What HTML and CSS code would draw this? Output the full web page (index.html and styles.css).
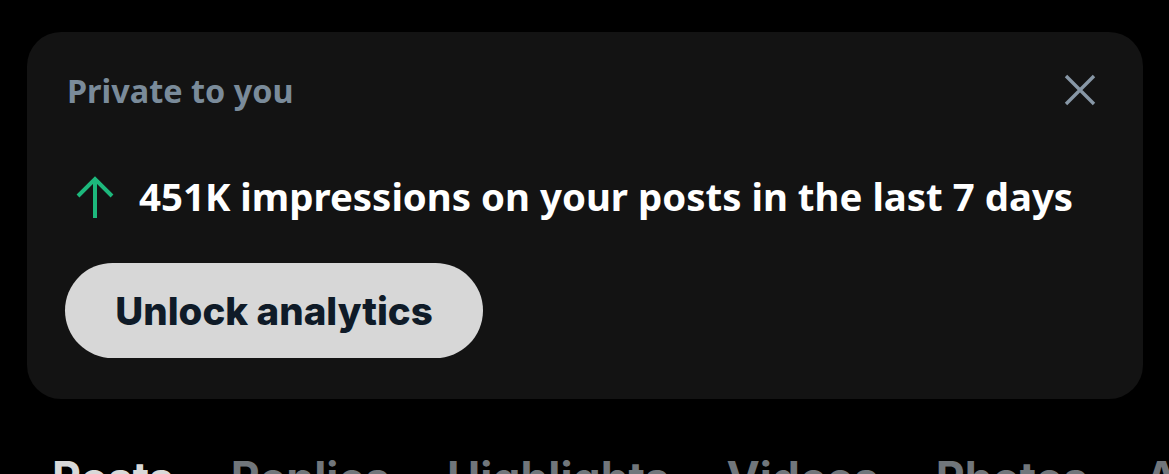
FILE: index.html
```html
<!DOCTYPE html>
<html lang="en">
<head>
<meta charset="utf-8">
<title>Private to you</title>
<link rel="stylesheet" href="styles.css">
</head>
<body>
<div class="page">
  <section class="card">
    <header class="card-head">
      <span class="label">Private to you</span>
      <button class="close" aria-label="Close">
        <svg width="34" height="34" viewBox="0 0 34 34"><path d="M3 3 L31 31 M31 3 L3 31" stroke="#8797a6" stroke-width="3.4" fill="none"/></svg>
      </button>
    </header>
    <div class="stat">
      <svg class="arrow" width="38" height="42" viewBox="0 0 38 42"><path d="M19 42 V3 M2 20 L19 3 L36 20" stroke="#1db87c" stroke-width="4" fill="none"/></svg>
      <span class="stat-text">451K impressions on your posts in the last 7 days</span>
    </div>
    <button class="unlock">Unlock analytics</button>
  </section>
  <nav class="tabs">
    <span class="tab active">Posts</span>
    <span class="tab">Replies</span>
    <span class="tab">Highlights</span>
    <span class="tab">Videos</span>
    <span class="tab">Photos</span>
    <span class="tab">Articles</span>
  </nav>
</div>
</body>
</html>
```
FILE: styles.css
```css
html, body {
  margin: 0;
  padding: 0;
  background: #000;
  overflow: hidden;
}
.page {
  width: 1169px;
  height: 474px;
  display: flex;
  flex-direction: column;
  overflow: hidden;
}
.card {
  margin: 32px 0 0 27px;
  width: 1116px;
  height: 367px;
  flex-shrink: 0;
  box-sizing: border-box;
  background: #131313;
  border-radius: 34px;
  padding: 38px 46px 40px 40px;
  display: flex;
  flex-direction: column;
  align-items: flex-start;
}
.card-head {
  width: 100%;
  height: 40px;
  display: flex;
  align-items: center;
  justify-content: space-between;
}
.label {
  font-family: "Noto Sans", sans-serif;
  font-weight: 700;
  font-size: 32.4px;
  color: #7a8b9a;
}
.close {
  background: none;
  border: 0;
  padding: 0;
  width: 34px;
  height: 34px;
  display: flex;
}
.stat {
  margin-top: 64px;
  height: 44px;
  display: flex;
  align-items: center;
}
.arrow {
  margin-left: 9px;
  margin-right: 25px;
  margin-top: 2px;
}
.stat-text {
  font-family: "Noto Sans", sans-serif;
  font-weight: 700;
  font-size: 38.4px;
  color: #ffffff;
  white-space: nowrap;
}
.unlock {
  margin-top: 45px;
  margin-left: -2px;
  width: 418px;
  height: 95px;
  border: 0;
  border-radius: 48px;
  background: #d7d7d7;
  color: #0f1b28;
  font-family: Inter, "Liberation Sans", sans-serif;
  font-weight: 800;
  font-size: 38.5px;
  padding: 0;
}
.tabs {
  margin-top: 52px;
  padding-left: 52px;
  display: flex;
  gap: 57px;
  white-space: nowrap;
}
.tab {
  font-family: Inter, "Liberation Sans", sans-serif;
  font-weight: 700;
  font-size: 44.6px;
  line-height: 54px;
  color: #71767b;
}
.tab.active {
  color: #d9d9d9;
}
```
